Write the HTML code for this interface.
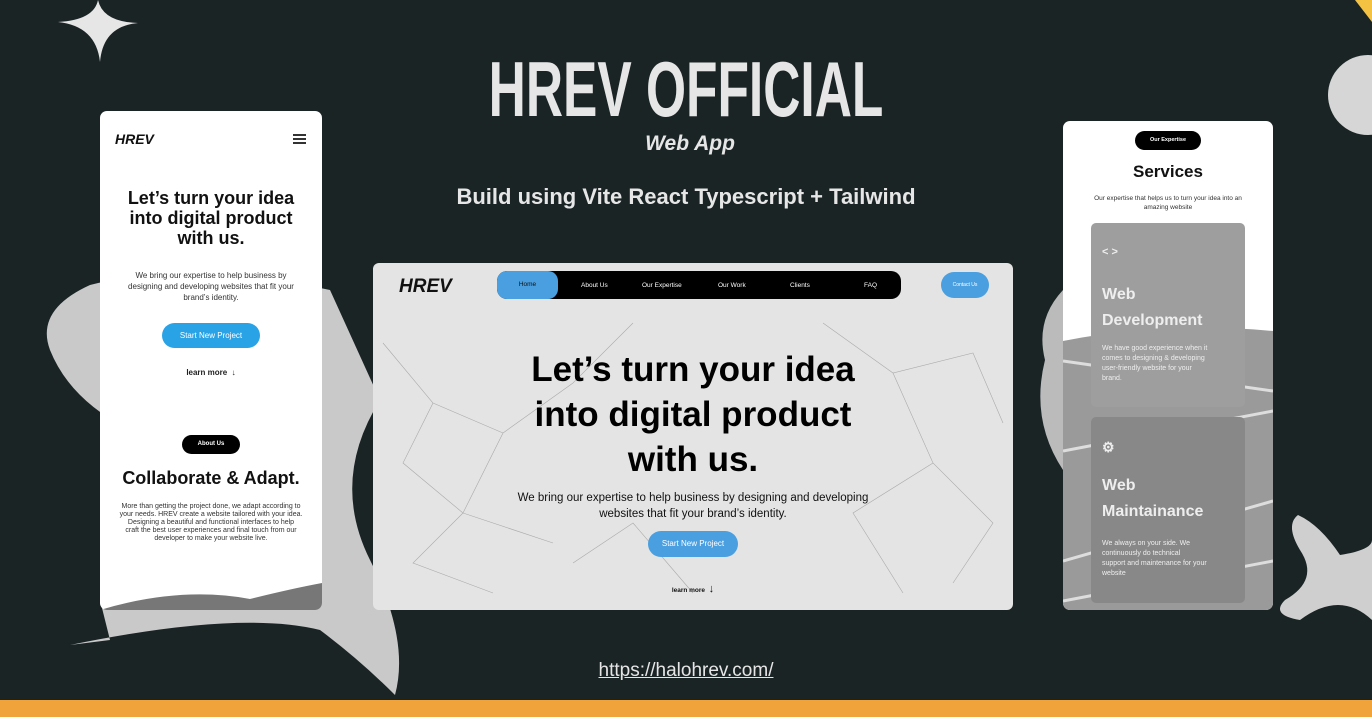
<!DOCTYPE html>
<html><head><meta charset="utf-8"><style>
*{margin:0;padding:0;box-sizing:border-box}
body{width:1372px;height:717px;overflow:hidden;background:#1b2425;position:relative;font-family:"Liberation Sans",sans-serif}
.a{position:absolute}
.c{text-align:center}
.b{font-weight:bold}
</style></head><body>
<svg class="a" style="left:0;top:0" width="1372" height="717">
<path d="M98 0 Q103 22 138 23 Q103 26 100 62 Q96 26 58 22 Q94 20 98 0Z" fill="#e6e6e6"/>
<path d="M330 290 Q190 260 90 285 Q35 310 50 350 Q70 400 130 430 Q230 480 100 600 L110 640 L70 645 Q240 610 320 630 Q360 660 395 695 Q410 640 370 560 Q330 480 380 400 Z" fill="#c9c9c9"/>
<path d="M1063 290 Q1035 320 1045 360 Q1030 420 1063 470 Z" fill="#bbb"/>
<circle cx="1368" cy="95" r="40" fill="#d6d6d6"/>
<path d="M1298 515 Q1320 525 1340 555 Q1372 550 1372 540 L1372 620 Q1340 590 1300 620 Q1270 615 1285 600 Q1320 580 1300 550 Q1285 525 1298 515Z" fill="#cfcfcf"/>
<path d="M1355 0 L1372 0 L1372 22Z" fill="#f4c242"/>
</svg>
<div class="a" style="left:0;top:700px;width:1372px;height:17px;background:#f0a33a"></div>

<div class="a c" style="left:286px;top:44px;width:800px;font-size:78px;font-weight:bold;color:#e6e6e6;white-space:nowrap;line-height:90px"><span style="display:inline-block;transform:scaleX(0.66)">HREV OFFICIAL</span></div>
<div class="a c b" style="left:590px;top:132px;width:200px;font-size:21px;font-style:italic;color:#e6e6e6">Web App</div>
<div class="a c b" style="left:386px;top:184px;width:600px;font-size:22px;color:#e6e6e6">Build using Vite React Typescript + Tailwind</div>
<div class="a c" style="left:536px;top:660px;width:300px;font-size:19px;color:#e6e6e6;text-decoration:underline">https://halohrev.com/</div>

<!-- left phone -->
<div class="a" style="left:100px;top:111px;width:222px;height:499px;background:#fff;border-radius:7px;overflow:hidden">
 <div class="a b" style="left:15px;top:20px;font-size:14px;font-style:italic;color:#111">HREV</div>
 <div class="a" style="left:193px;top:23px;width:13px;height:10px;border-top:2px solid #333;border-bottom:2px solid #333"><div style="margin-top:2px;height:2px;background:#333"></div></div>
 <div class="a c b" style="left:0;top:77px;width:222px;font-size:18px;line-height:20px;color:#111">Let’s turn your idea<br>into digital product<br>with us.</div>
 <div class="a c" style="left:0;top:159px;width:222px;font-size:8px;line-height:11px;color:#333">We bring our expertise to help business by<br>designing and developing websites that fit your<br>brand’s identity.</div>
 <div class="a c" style="left:62px;top:212px;width:98px;height:25px;border-radius:13px;background:#29a3e6;color:#fff;font-size:8px;line-height:25px">Start New Project</div>
 <div class="a c b" style="left:0;top:257px;width:222px;font-size:8px;color:#222">learn more &nbsp;↓</div>
 <div class="a c b" style="left:82px;top:324px;width:58px;height:19px;border-radius:10px;background:#000;color:#fff;font-size:6px;line-height:19px">About Us</div>
 <div class="a c b" style="left:0;top:357px;width:222px;font-size:18px;color:#111">Collaborate &amp; Adapt.</div>
 <div class="a c" style="left:0;top:392px;width:222px;font-size:7px;line-height:8px;color:#333">More than getting the project done, we adapt according to<br>your needs. HREV create a website tailored with your idea.<br>Designing a beautiful and functional interfaces to help<br>craft the best user experiences and final touch from our<br>developer to make your website live.</div>
 <svg class="a" style="left:0;top:460px" width="222" height="39"><path d="M0 39 Q80 15 150 28 Q190 18 222 12 L222 39Z" fill="#777"/></svg>
</div>

<!-- center desktop -->
<div class="a" style="left:373px;top:263px;width:640px;height:347px;background:#e4e4e4;border-radius:6px;overflow:hidden">
 <svg class="a" style="left:0;top:0" width="640" height="347" stroke="#aaa" stroke-width="0.6" fill="none"><path d="M10 80 L60 140 L30 200 L90 250 L40 300 L120 330 M60 140 L130 170 L90 250 L180 280 M130 170 L200 120 L260 60 M450 60 L520 110 L600 90 L630 160 M520 110 L560 200 L620 260 L580 320 M560 200 L480 250 L530 330 M200 300 L260 260 L320 330"/></svg>
 <div class="a b" style="left:26px;top:13px;font-size:19px;font-style:italic;color:#111">HREV</div>
 <div class="a" style="left:124px;top:8px;width:404px;height:28px;background:#000;border-radius:10px;font-size:6.5px;color:#fff">
  <div class="a c" style="left:0;top:0;width:61px;height:28px;background:#4a9fe0;border-radius:10px;line-height:28px;color:#111">Home</div>
  <span class="a" style="left:84px;top:11px">About Us</span><span class="a" style="left:145px;top:11px">Our Expertise</span><span class="a" style="left:221px;top:11px">Our Work</span><span class="a" style="left:293px;top:11px">Clients</span><span class="a" style="left:367px;top:11px">FAQ</span>
 </div>
 <div class="a c" style="left:568px;top:9px;width:48px;height:26px;border-radius:13px;background:#4a9fe0;color:#fff;font-size:5px;line-height:26px">Contact Us</div>
 <div class="a c b" style="left:0;top:84px;width:640px;font-size:35px;line-height:45px;color:#000">Let’s turn your idea<br>into digital product<br>with us.</div>
 <div class="a c" style="left:0;top:227px;width:640px;font-size:11.5px;line-height:16px;color:#111">We bring our expertise to help business by designing and developing<br>websites that fit your brand’s identity.</div>
 <div class="a c" style="left:275px;top:268px;width:90px;height:26px;border-radius:13px;background:#4a9fe0;color:#fff;font-size:8px;line-height:26px">Start New Project</div>
 <div class="a c b" style="left:0;top:320px;width:640px;font-size:6.5px;color:#111">learn more &nbsp;<span style="font-size:11px">↓</span></div>
</div>

<!-- right phone -->
<div class="a" style="left:1063px;top:121px;width:210px;height:489px;background:#fff;border-radius:7px;overflow:hidden">
 <svg class="a" style="left:0;top:180px" width="210" height="309"><path d="M0 40 Q100 20 210 30 L210 309 L0 309Z" fill="#9a9a9a"/><path d="M0 60 L210 90 M0 150 L210 110 M0 260 L210 200 M0 300 L210 260" stroke="#ddd" stroke-width="3"/></svg>
 <div class="a c b" style="left:72px;top:10px;width:66px;height:19px;border-radius:10px;background:#000;color:#fff;font-size:5.5px;line-height:19px">Our Expertise</div>
 <div class="a c b" style="left:0;top:41px;width:210px;font-size:17px;color:#111">Services</div>
 <div class="a c" style="left:0;top:73px;width:210px;font-size:6.5px;line-height:9px;color:#333">Our expertise that helps us to turn your idea into an<br>amazing website</div>
 <div class="a" style="left:28px;top:102px;width:154px;height:184px;background:#9e9e9e;border-radius:5px;color:#eee">
  <div class="a b" style="left:11px;top:23px;font-size:11px">&lt; &gt;</div>
  <div class="a b" style="left:11px;top:59px;font-size:16px;line-height:26px">Web<br>Development</div>
  <div class="a" style="left:11px;top:121px;font-size:7px;line-height:10px">We have good experience when it<br>comes to designing &amp; developing<br>user-friendly website for your<br>brand.</div>
 </div>
 <div class="a" style="left:28px;top:296px;width:154px;height:186px;background:#888;border-radius:5px;color:#eee">
  <div class="a b" style="left:11px;top:22px;font-size:14px">⚙</div>
  <div class="a b" style="left:11px;top:56px;font-size:16px;line-height:26px">Web<br>Maintainance</div>
  <div class="a" style="left:11px;top:122px;font-size:7px;line-height:10px">We always on your side. We<br>continuously do technical<br>support and maintenance for your<br>website</div>
 </div>
</div>
</body></html>
